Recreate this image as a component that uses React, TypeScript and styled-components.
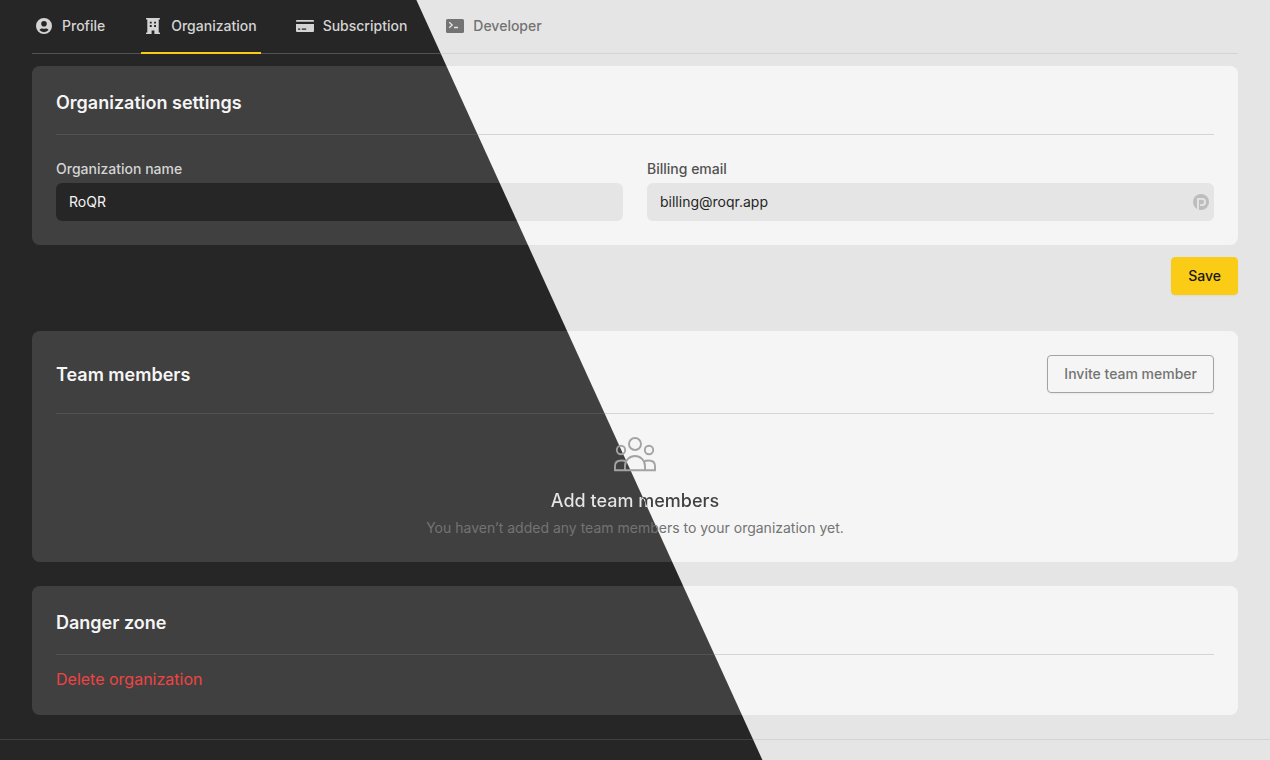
import React from "react";
import styled, { createGlobalStyle } from "styled-components";

/* Both themes share one viewport-fixed diagonal, so every surface changes colour on the same line. */
const split = (dark: string, light: string) =>
  `linear-gradient(65.52deg, ${dark} calc(50% - 42px), ${light} calc(50% - 41px)) fixed`;

const GlobalStyle = createGlobalStyle`
  *, *::before, *::after { box-sizing: border-box; }
  html, body { margin: 0; padding: 0; }
  body {
    font-family: Inter, "Liberation Sans", sans-serif;
    font-size: 14px;
    line-height: 20px;
    -webkit-font-smoothing: antialiased;
  }
  h2, h3, p { margin: 0; }
  button, input { font: inherit; }
  svg { display: block; flex: none; }
`;

const Page = styled.div`
  min-height: 100vh;
  background: ${split("#262626", "#e5e5e5")};
`;

const Content = styled.main`
  padding: 0 32px 24px;
`;

const Rule = styled.hr`
  height: 1px;
  margin: 0;
  border: 0;
  background: ${split("#525252", "#d4d4d4")};
`;

const Nav = styled.nav`
  margin-bottom: 12px;
  ${Rule} {
    margin-top: -1px;
  }
`;

const TabList = styled.div`
  position: relative;
  z-index: 1;
  display: flex;
  gap: 32px;
`;

const Tab = styled.a<{ $active?: boolean; $muted?: boolean }>`
  display: flex;
  align-items: center;
  gap: 8px;
  padding: 16px 4px;
  border-bottom: 2px solid ${(p) => (p.$active ? "#facc15" : "transparent")};
  color: ${(p) => (p.$muted ? "#737373" : "#d4d4d4")};
  font-weight: 500;
  text-decoration: none;
  svg {
    margin-left: -2px;
  }
`;

const Card = styled.section`
  padding: 24px;
  border-radius: 8px;
  background: ${split("#404040", "#f5f5f5")};
`;

const CardHeader = styled.header`
  display: flex;
  align-items: center;
  justify-content: space-between;
  padding-bottom: 20px;
`;

const CardTitle = styled.h2`
  padding-top: 2px;
  color: #f5f5f5;
  font-size: 18px;
  line-height: 22px;
  font-weight: 600;
`;

const Fields = styled.div`
  display: grid;
  grid-template-columns: 1fr 1fr;
  gap: 24px;
  padding-top: 24px;
`;

const Field = styled.div`
  display: flex;
  flex-direction: column;
  gap: 4px;
`;

const Label = styled.label<{ $onLight?: boolean }>`
  color: ${(p) => (p.$onLight ? "#525252" : "#d4d4d4")};
  font-weight: 500;
`;

const InputBox = styled.div`
  display: flex;
  align-items: center;
  height: 38px;
  padding-right: 5px;
  border-radius: 6px;
  background: ${split("#262626", "#e5e5e5")};
`;

const Input = styled.input<{ $onLight?: boolean }>`
  flex: 1;
  min-width: 0;
  height: 38px;
  padding: 8px 13px 10px;
  border: 0;
  outline: 0;
  background: transparent;
  color: ${(p) => (p.$onLight ? "#262626" : "#f5f5f5")};
`;

const Actions = styled.div`
  display: flex;
  justify-content: flex-end;
  padding: 12px 0 36px;
`;

const Button = styled.button<{ $primary?: boolean }>`
  height: 38px;
  padding: 0 16px;
  border: 1px solid ${(p) => (p.$primary ? "#facc15" : "#a3a3a3")};
  border-radius: 4px;
  background: ${(p) => (p.$primary ? "#facc15" : "transparent")};
  box-shadow: 0 1px 2px rgba(0, 0, 0, 0.05);
  color: ${(p) => (p.$primary ? "#171717" : "#737373")};
  font-weight: 500;
  cursor: pointer;
`;

const EmptyState = styled.div`
  display: flex;
  flex-direction: column;
  align-items: center;
  padding-top: 16px;
  text-align: center;
`;

const EmptyTitle = styled.h3`
  margin: 8px 0 4px;
  padding-top: 2px;
  background: ${split("#e5e5e5", "#404040")};
  -webkit-background-clip: text;
  background-clip: text;
  color: transparent;
  font-size: 18px;
  line-height: 26px;
  font-weight: 500;
`;

const EmptyText = styled.p`
  color: #737373;
`;

const DangerCard = styled(Card)`
  margin-top: 24px;
`;

const DangerButton = styled.button`
  display: block;
  margin-top: 12px;
  padding: 0;
  border: 0;
  background: none;
  color: #ef4444;
  font-size: 16px;
  line-height: 24px;
  cursor: pointer;
`;

const FooterRule = styled(Rule)`
  background: ${split("#404040", "#d4d4d4")};
`;

const ProfileIcon = () => (
  <svg width="20" height="20" viewBox="0 0 20 20" fill="currentColor" aria-hidden="true">
    <path
      fillRule="evenodd"
      d="M10 2a8 8 0 1 0 0 16 8 8 0 0 0 0-16Zm0 3a2.8 2.8 0 1 1 0 5.6 2.8 2.8 0 0 1 0-5.6Zm0 11.2a6 6 0 0 1-4.6-2.1c.5-1 1.5-1.6 2.7-1.6.4 0 .9.3 1.9.3s1.5-.3 1.9-.3c1.2 0 2.2.6 2.7 1.6a6 6 0 0 1-4.6 2.1Z"
    />
  </svg>
);

const BuildingIcon = () => (
  <svg width="20" height="20" viewBox="0 0 20 20" fill="currentColor" aria-hidden="true">
    <path
      fillRule="evenodd"
      d="M3.5 2h13a.5.5 0 0 1 .5.5v.6a.5.5 0 0 1-.5.5h-.8v12.800h.8a.5.5 0 0 1 .5.5v.6a.5.5 0 0 1-.5.5h-5.1v-3.500H8.600V18H3.500a.5.5 0 0 1-.5-.5v-.6a.5.5 0 0 1 .5-.5h.8V3.600h-.8a.5.5 0 0 1-.5-.5v-.6a.5.5 0 0 1 .5-.5ZM6.800 5.700v1.700h1.900v-1.700Zm4.300 0v1.700h1.900v-1.700ZM6.800 9v1.900h1.900V9Zm4.300 0v1.900h1.900V9Z"
    />
  </svg>
);

const CardIcon = () => (
  <svg width="20" height="20" viewBox="0 0 20 20" fill="currentColor" aria-hidden="true">
    <path d="M1 5.8V5a1 1 0 0 1 1-1h16a1 1 0 0 1 1 1v.8Z" />
    <path
      fillRule="evenodd"
      d="M1 8h18v7a1 1 0 0 1-1 1H2a1 1 0 0 1-1-1ZM3 12.600v1.200h2.200v-1.200Zm3.800 0v1.200h4.400v-1.200Z"
    />
  </svg>
);

const TerminalIcon = () => (
  <svg width="20" height="20" viewBox="0 0 20 20" fill="none" aria-hidden="true">
    <rect x="1" y="3" width="18" height="14" rx="1.5" fill="currentColor" />
    <path d="M4.200 6.200l3 2.800-3 2.800M9 11.500h4" stroke="#e5e5e5" strokeWidth="1.3" />
  </svg>
);

const PasswordIcon = () => (
  <svg width="16" height="16" viewBox="0 0 16 16" fill="none" aria-hidden="true">
    <circle cx="8" cy="8" r="8" fill="#bdbdbd" />
    <path d="M5 15.500V4.900h4a3 3 0 0 1 0 6.200H7" stroke="#e5e5e5" strokeWidth="1.9" />
  </svg>
);

const TeamIcon = () => (
  <svg width="48" height="48" viewBox="0 0 48 48" fill="none" stroke="#a3a3a3" strokeWidth="1.9" aria-hidden="true">
    <circle cx="24" cy="14" r="6" />
    <circle cx="10" cy="20" r="4.2" />
    <circle cx="38" cy="20" r="4.2" />
    <path d="M14 40v-4a10 10 0 0 1 20 0v4" />
    <path d="M15 31.500c-1.200-.7-2.700-1-4.500-1C6.500 30.500 4 32.500 4 36v4.200h40V36c0-3.500-2.500-5.500-6.500-5.500-1.800 0-3.300.3-4.500 1" />
  </svg>
);

export default function App() {
  return (
    <Page>
      <GlobalStyle />
      <Content>
        <Nav aria-label="Settings">
          <TabList>
            <Tab href="#profile">
              <ProfileIcon />
              Profile
            </Tab>
            <Tab href="#organization" $active aria-current="page">
              <BuildingIcon />
              Organization
            </Tab>
            <Tab href="#subscription">
              <CardIcon />
              Subscription
            </Tab>
            <Tab href="#developer" $muted>
              <TerminalIcon />
              Developer
            </Tab>
          </TabList>
          <Rule />
        </Nav>

        <Card>
          <CardHeader>
            <CardTitle>Organization settings</CardTitle>
          </CardHeader>
          <Rule />
          <Fields>
            <Field>
              <Label htmlFor="org-name">Organization name</Label>
              <InputBox>
                <Input id="org-name" type="text" defaultValue="RoQR" />
              </InputBox>
            </Field>
            <Field>
              <Label htmlFor="billing-email" $onLight>
                Billing email
              </Label>
              <InputBox>
                <Input id="billing-email" type="email" defaultValue="billing@roqr.app" $onLight />
                <PasswordIcon />
              </InputBox>
            </Field>
          </Fields>
        </Card>

        <Actions>
          <Button type="button" $primary>
            Save
          </Button>
        </Actions>

        <Card>
          <CardHeader>
            <CardTitle>Team members</CardTitle>
            <Button type="button">Invite team member</Button>
          </CardHeader>
          <Rule />
          <EmptyState>
            <TeamIcon />
            <EmptyTitle>Add team members</EmptyTitle>
            <EmptyText>You haven’t added any team members to your organization yet.</EmptyText>
          </EmptyState>
        </Card>

        <DangerCard>
          <CardHeader>
            <CardTitle>Danger zone</CardTitle>
          </CardHeader>
          <Rule />
          <DangerButton type="button">Delete organization</DangerButton>
        </DangerCard>
      </Content>
      <FooterRule />
    </Page>
  );
}
